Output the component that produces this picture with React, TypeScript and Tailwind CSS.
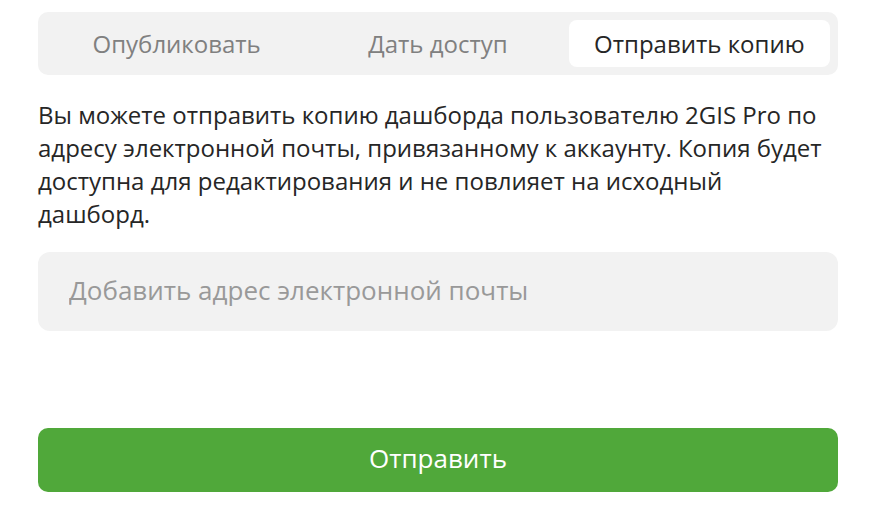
import React from 'react';

const tabs = ['Опубликовать', 'Дать доступ', 'Отправить копию'];

const App: React.FC = () => {
  const active = 2;

  return (
    <div className="w-[880px] h-[506px] bg-white pt-[12px] font-['Open_Sans',sans-serif] text-[#262626]">
      <div className="ml-[38px] w-[800px]">
        <div className="flex h-[63px] rounded-[10px] bg-[#f2f2f2] p-[8px]">
          {tabs.map((tab, index) => (
            <div
              key={index}
              className={`flex flex-1 items-center justify-center rounded-[8px] text-[24px] ${
                index === active ? 'bg-white text-[#262626]' : 'text-[#808080]'
              }`}
            >
              {tab}
            </div>
          ))}
        </div>

        <p className="mt-[23px] text-[24px] leading-[33px]">
          Вы можете отправить копию дашборда пользователю 2GIS Pro по адресу электронной почты,
          привязанному к аккаунту. Копия будет доступна для редактирования и не повлияет на
          исходный дашборд.
        </p>

        <input
          className="mt-[22px] block h-[79px] w-full rounded-[12px] bg-[#f2f2f2] px-[31px] pb-[4px] text-[26px] outline-none placeholder:text-[#999999]"
          placeholder="Добавить адрес электронной почты"
        />

        <button className="mt-[97px] flex h-[64px] w-full items-center justify-center rounded-[10px] bg-[#50a83a] pb-[4px] text-[26px] text-white">
          Отправить
        </button>
      </div>
    </div>
  );
};

export default App;
